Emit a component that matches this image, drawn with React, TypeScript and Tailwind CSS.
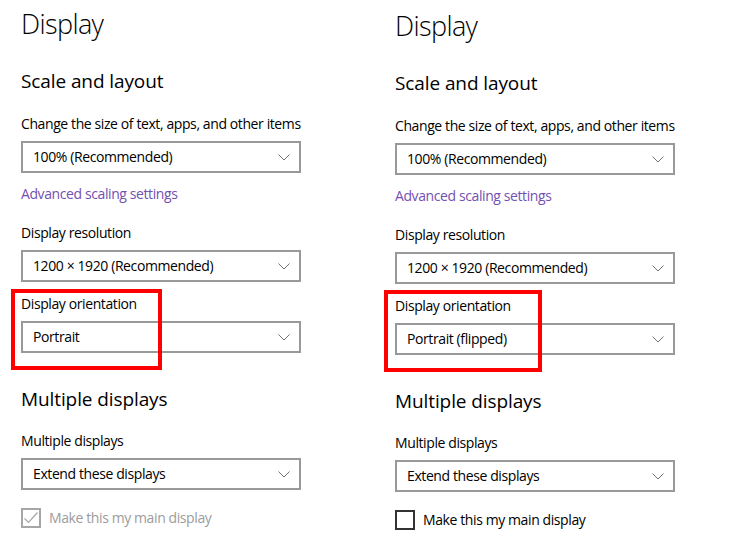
type PanelProps = {
  orientation: string;
  mainChecked: "disabled" | "off";
  highlight: { left: number; top: number; width: number; height: number };
};

function Label({ children, className = "" }: { children: string; className?: string }) {
  return <p className={`h-5 text-[14px] leading-5 tracking-[-0.4px] text-black ${className}`}>{children}</p>;
}

function Chevron() {
  return (
    <svg viewBox="0 0 12 7" className="h-[7px] w-3" fill="none" stroke="#707070" strokeWidth="1">
      <path d="M0.5 0.5 L6 6 L11.5 0.5" />
    </svg>
  );
}

function Dropdown({ value }: { value: string }) {
  return (
    <div className="mt-[7px] flex h-8 w-[280px] items-center justify-between border-2 border-[#999999] pl-[10px] pr-[9px]">
      <span className="text-[14px] leading-7 tracking-[-0.4px] text-black">{value}</span>
      <Chevron />
    </div>
  );
}

function Panel({ orientation, mainChecked, highlight }: PanelProps) {
  return (
    <div className="relative pl-[21px]">
      <h1 className="pt-[6px] text-[27px] font-light leading-9 tracking-[-0.6px] text-black">Display</h1>

      <h2 className="mt-[25px] h-7 text-[19px] leading-7 tracking-[-0.1px] text-black">Scale and layout</h2>
      <Label className="mt-[19px]">Change the size of text, apps, and other items</Label>
      <Dropdown value="100% (Recommended)" />
      <p className="mt-[11px] h-5 text-[14px] leading-5 tracking-[-0.4px] text-[#7450b0]">Advanced scaling settings</p>

      <Label className="mt-[19px]">Display resolution</Label>
      <Dropdown value="1200 × 1920 (Recommended)" />

      <Label className="mt-[12px]">Display orientation</Label>
      <Dropdown value={orientation} />

      <h2 className="mt-[32px] h-7 text-[19px] leading-7 tracking-[-0.1px] text-black">Multiple displays</h2>
      <Label className="mt-[18px]">Multiple displays</Label>
      <Dropdown value="Extend these displays" />

      <div className="mt-[18px] flex h-5 items-center gap-2">
        {mainChecked === "disabled" ? (
          <span className="flex h-5 w-5 items-center justify-center border-2 border-[#a6a6a6]">
            <svg viewBox="0 0 16 16" className="h-4 w-4" fill="none" stroke="#a6a6a6" strokeWidth="1.2">
              <path d="M1.5 8.5 L5.5 12.5 L14.5 2.5" />
            </svg>
          </span>
        ) : (
          <span className="h-5 w-5 border-2 border-[#333333]" />
        )}
        <span
          className={`text-[14px] leading-5 tracking-[-0.4px] ${
            mainChecked === "disabled" ? "text-[#9c9c9c]" : "text-black"
          }`}
        >
          Make this my main display
        </span>
      </div>

      <div
        className="absolute border-4 border-[#ff0000]"
        style={{ left: highlight.left, top: highlight.top, width: highlight.width, height: highlight.height }}
      />
    </div>
  );
}

export default function App() {
  return (
    <div
      className="grid h-[542px] w-[733px] grid-cols-[374px_359px] overflow-hidden bg-white"
      style={{ fontFamily: '"Segoe UI", "Open Sans", sans-serif' }}
    >
      <Panel
        orientation="Portrait"
        mainChecked="disabled"
        highlight={{ left: 11, top: 289, width: 151, height: 81 }}
      />
      <div className="pt-[2px]">
        <Panel
          orientation="Portrait (flipped)"
          mainChecked="off"
          highlight={{ left: 10, top: 288, width: 158, height: 82 }}
        />
      </div>
    </div>
  );
}
